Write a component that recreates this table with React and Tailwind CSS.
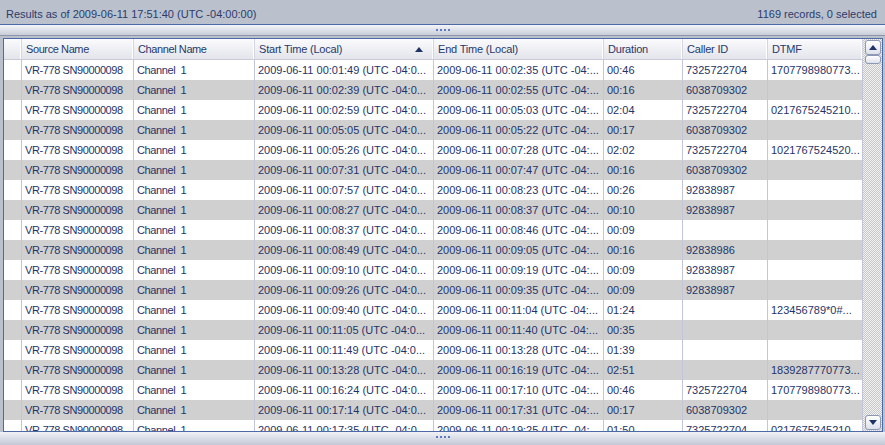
import React from "react";

const rows = [
  ["00:01:49", "00:02:35", "00:46", "7325722704", "1707798980773..."],
  ["00:02:39", "00:02:55", "00:16", "6038709302", ""],
  ["00:02:59", "00:05:03", "02:04", "7325722704", "0217675245210..."],
  ["00:05:05", "00:05:22", "00:17", "6038709302", ""],
  ["00:05:26", "00:07:28", "02:02", "7325722704", "1021767524520..."],
  ["00:07:31", "00:07:47", "00:16", "6038709302", ""],
  ["00:07:57", "00:08:23", "00:26", "92838987", ""],
  ["00:08:27", "00:08:37", "00:10", "92838987", ""],
  ["00:08:37", "00:08:46", "00:09", "", ""],
  ["00:08:49", "00:09:05", "00:16", "92838986", ""],
  ["00:09:10", "00:09:19", "00:09", "92838987", ""],
  ["00:09:26", "00:09:35", "00:09", "92838987", ""],
  ["00:09:40", "00:11:04", "01:24", "", "123456789*0#..."],
  ["00:11:05", "00:11:40", "00:35", "", ""],
  ["00:11:49", "00:13:28", "01:39", "", ""],
  ["00:13:28", "00:16:19", "02:51", "", "1839287770773..."],
  ["00:16:24", "00:17:10", "00:46", "7325722704", "1707798980773..."],
  ["00:17:14", "00:17:31", "00:17", "6038709302", ""],
  ["00:17:35", "00:19:25", "01:50", "7325722704", "0217675245210..."],
];

function Dots() {
  return (
    <div className="flex gap-[2px]">
      <div className="w-[2px] h-[2px] bg-[#5b7cc0]" />
      <div className="w-[2px] h-[2px] bg-[#5b7cc0]" />
      <div className="w-[2px] h-[2px] bg-[#5b7cc0]" />
      <div className="w-[2px] h-[2px] bg-[#5b7cc0]" />
    </div>
  );
}

function Cell({ w, children, tight }) {
  return (
    <div
      className={`${w} ${tight ? "tracking-[-0.4px]" : ""} shrink-0 h-full flex items-center overflow-hidden whitespace-nowrap pl-[3px] border-r border-[#c3c6d8]`}
    >
      {children}
    </div>
  );
}

function HeadCell({ w, children, sort, tight }) {
  return (
    <div
      className={`${w} ${tight ? "tracking-[-0.4px]" : "tracking-[-0.2px]"} shrink-0 h-full flex items-center justify-between overflow-hidden whitespace-nowrap pl-[4px] pr-[10px] border-r border-[#d3d6e0] shadow-[inset_-1px_0_0_#ffffff]`}
    >
      <span>{children}</span>
      {sort && (
        <svg width="8" height="5" viewBox="0 0 8 5">
          <path d="M0 5 L4 0 L8 5 Z" fill="#1f3366" />
        </svg>
      )}
    </div>
  );
}

function ScrollBtn({ down }) {
  return (
    <div className="w-[16px] h-[15px] rounded-[3px] border border-[#8c98b4] bg-gradient-to-b from-[#ffffff] to-[#dde1ea] flex items-center justify-center">
      <svg width="8" height="5" viewBox="0 0 8 5">
        {down ? (
          <path d="M0 0 L8 0 L4 5 Z" fill="#1f3366" />
        ) : (
          <path d="M0 5 L4 0 L8 5 Z" fill="#1f3366" />
        )}
      </svg>
    </div>
  );
}

export default function App() {
  return (
    <div
      className="w-[885px] h-[445px] bg-[#bac1cd] flex flex-col overflow-hidden text-[11px] text-[#1f3468]"
      style={{ fontFamily: '"Liberation Sans", Arial, sans-serif' }}
    >
      <div className="h-[24px] shrink-0 flex items-center justify-between pl-[6px] pr-[8px] pt-[5px] text-[#2a3c6c]">
        <span>Results as of 2009-06-11 17:51:40 (UTC -04:00:00)</span>
        <span>1169 records, 0 selected</span>
      </div>
      <div className="h-px shrink-0 bg-[#4d69a6]" />
      <div className="h-[11px] shrink-0 bg-gradient-to-b from-[#f4f5f9] to-[#c9cdd9] border-b border-[#8d95a8] flex items-center justify-center">
        <Dots />
      </div>
      <div className="h-[2px] shrink-0" />
      <div className="ml-[3px] w-[880px] h-[394px] shrink-0 border border-[#4d69a6] flex bg-white">
        <div className="w-[859px] shrink-0 flex flex-col overflow-hidden">
          <div className="h-[21px] shrink-0 flex border-b border-[#c9ccd8] bg-gradient-to-b from-[#fbfbfd] to-[#e3e5eb] text-[#27396b]">
            <HeadCell w="w-[18px]"></HeadCell>
            <HeadCell w="w-[112px]" tight>Source Name</HeadCell>
            <HeadCell w="w-[121px]" tight>Channel Name</HeadCell>
            <HeadCell w="w-[179px]" sort>
              Start Time (Local)
            </HeadCell>
            <HeadCell w="w-[170px]">End Time (Local)</HeadCell>
            <HeadCell w="w-[79px]">Duration</HeadCell>
            <HeadCell w="w-[85px]">Caller ID</HeadCell>
            <HeadCell w="w-[95px]">DTMF</HeadCell>
          </div>
          {rows.map((r, i) => (
            <div
              key={i}
              className={`h-[20px] shrink-0 flex ${i % 2 === 1 ? "bg-[#d0d0d0]" : "bg-white"}`}
            >
              <Cell w="w-[18px]"></Cell>
              <Cell w="w-[112px]" tight>VR-778 SN90000098</Cell>
              <Cell w="w-[121px]" tight>Channel&nbsp;&nbsp;1</Cell>
              <Cell w="w-[179px]">2009-06-11 {r[0]} (UTC -04:0...</Cell>
              <Cell w="w-[170px]">2009-06-11 {r[1]} (UTC -04:...</Cell>
              <Cell w="w-[79px]">{r[2]}</Cell>
              <Cell w="w-[85px]">{r[3]}</Cell>
              <Cell w="w-[95px]">{r[4]}</Cell>
            </div>
          ))}
        </div>
        <div className="w-[19px] shrink-0 flex flex-col items-center bg-[image:repeating-conic-gradient(#c6c6c6_0_25%,#f3f3f3_0_50%)] bg-[length:2px_2px]">
          <div className="mt-px">
            <ScrollBtn />
          </div>
          <div className="w-[16px] h-[9px] rounded-[3px] border border-[#8c98b4] bg-gradient-to-b from-[#ffffff] to-[#dde1ea]" />
          <div className="flex-1" />
          <div className="mb-px">
            <ScrollBtn down />
          </div>
        </div>
      </div>
      <div className="h-[13px] shrink-0 bg-gradient-to-b from-[#f1f2f7] to-[#c3c8d6] flex items-start justify-center pt-[4px]">
        <Dots />
      </div>
    </div>
  );
}
